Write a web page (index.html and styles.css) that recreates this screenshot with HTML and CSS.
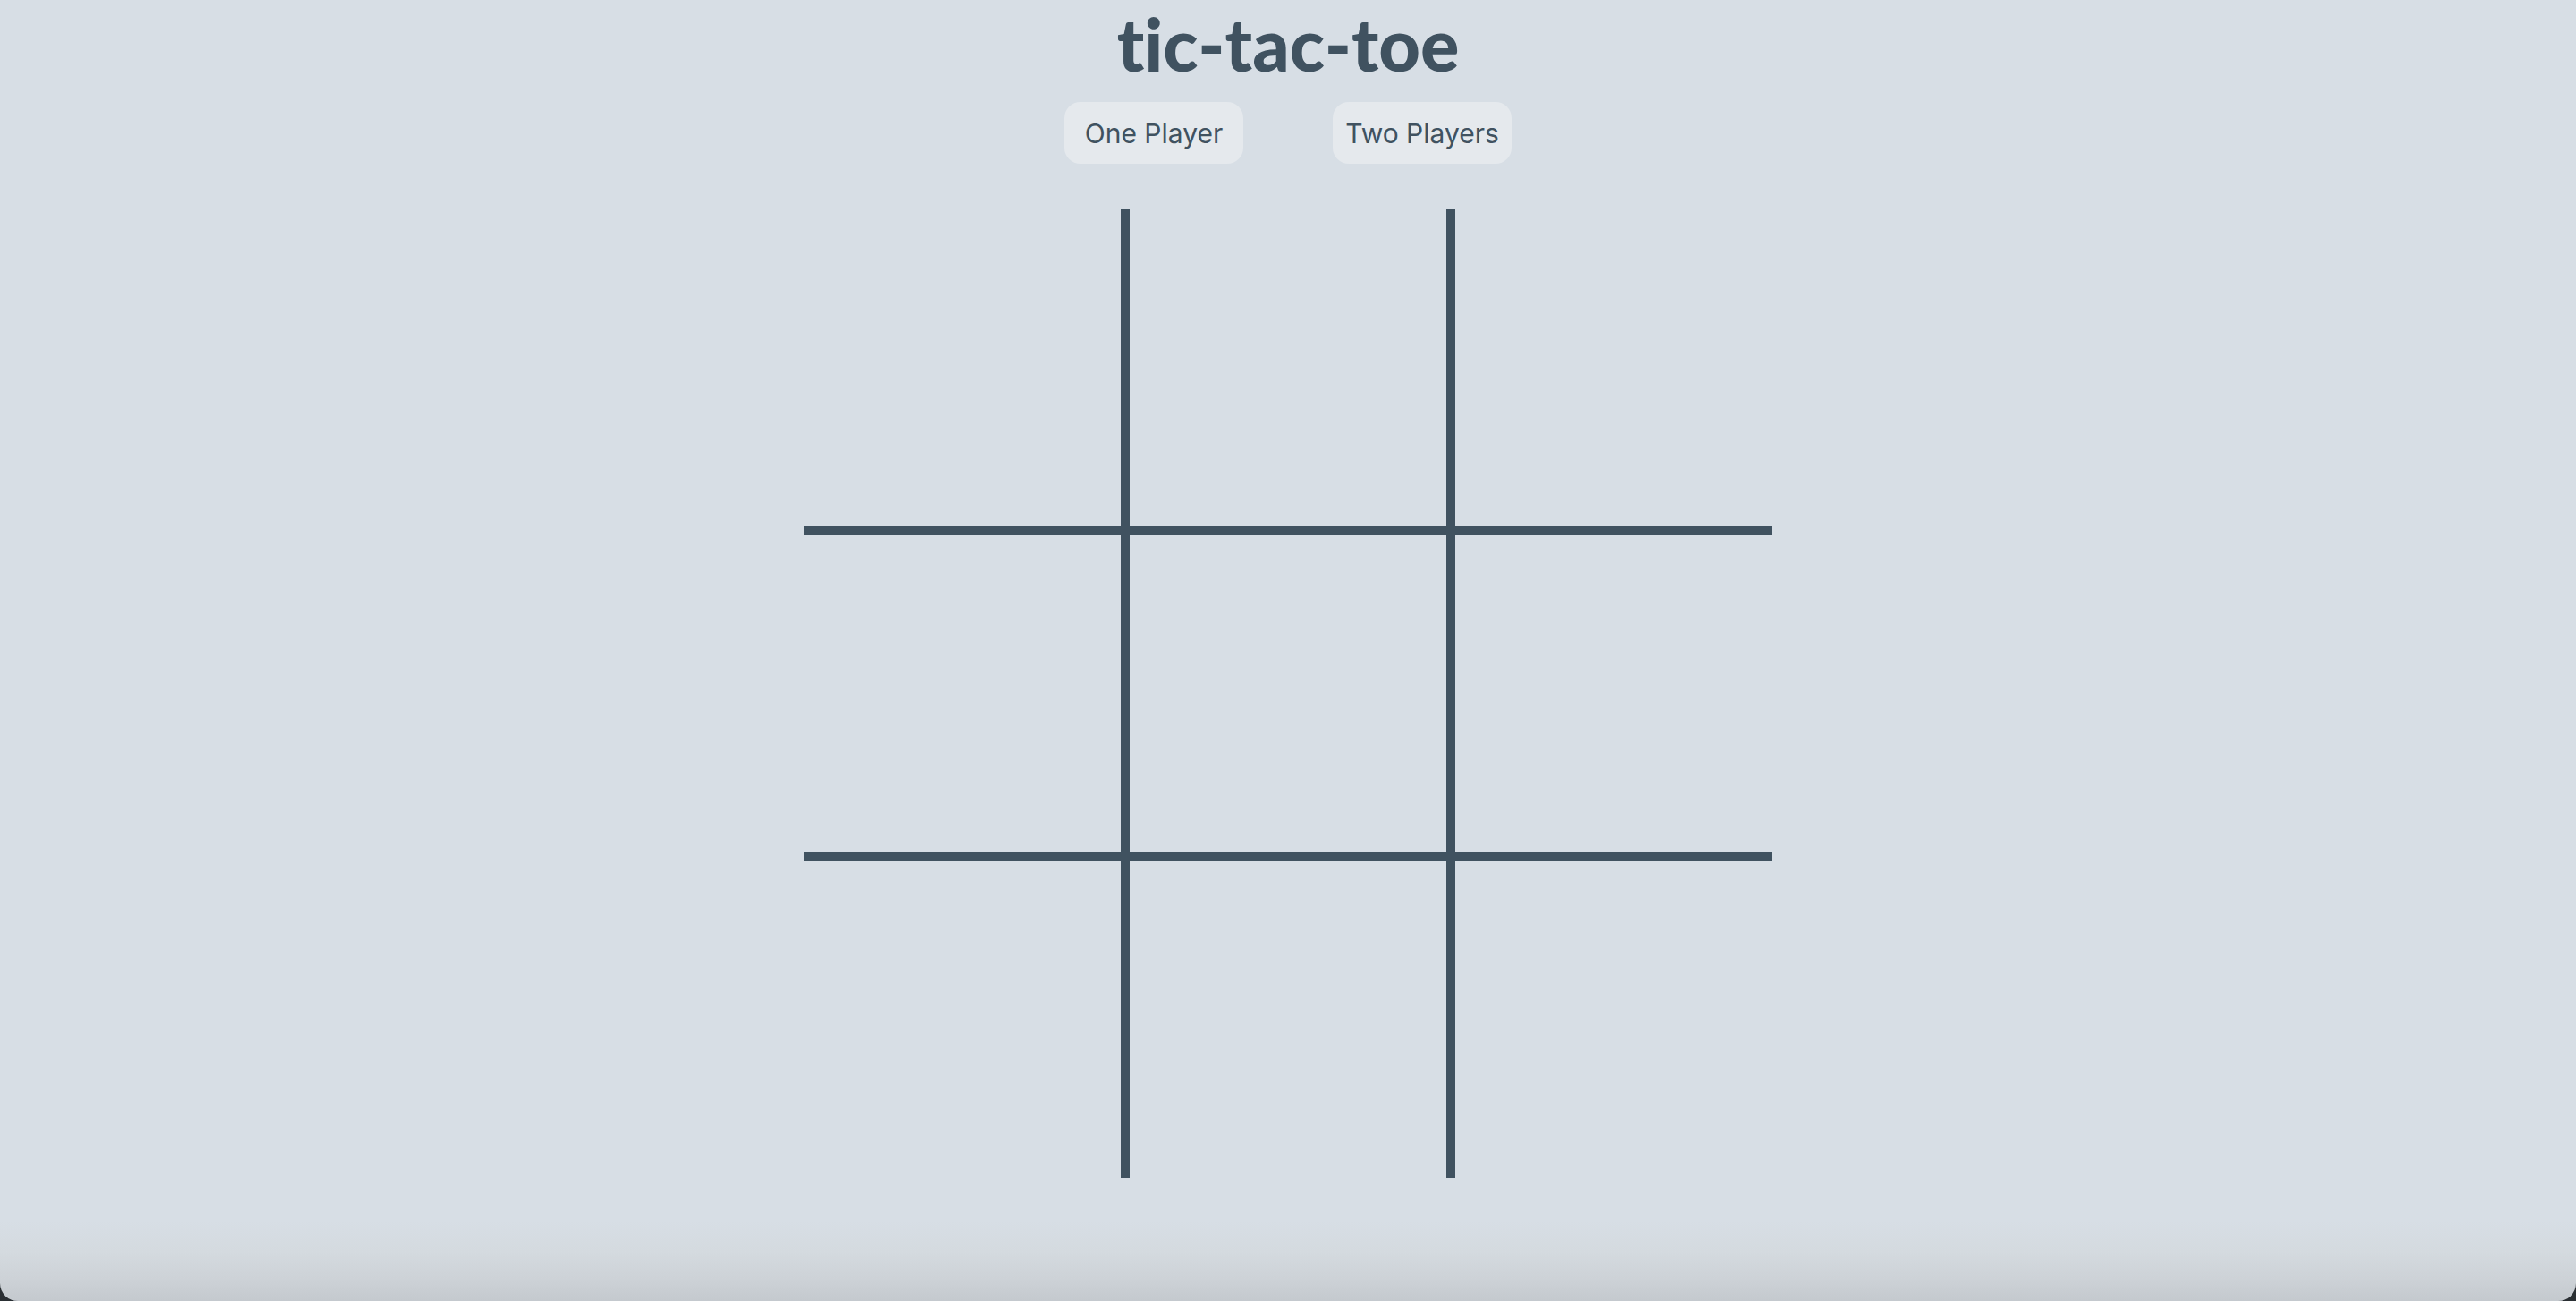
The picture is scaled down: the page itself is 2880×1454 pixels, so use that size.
FILE: index.html
```html
<!DOCTYPE html>
<html lang="en">
<head>
<meta charset="utf-8">
<title>tic-tac-toe</title>
<link rel="stylesheet" href="styles.css">
</head>
<body>
<div class="page">
  <h1 class="title">tic-tac-toe</h1>
  <div class="modes">
    <button class="mode">One Player</button>
    <button class="mode">Two Players</button>
  </div>
  <div class="board">
    <div class="cell"></div><div class="cell"></div><div class="cell"></div>
    <div class="cell"></div><div class="cell"></div><div class="cell"></div>
    <div class="cell"></div><div class="cell"></div><div class="cell"></div>
  </div>
</div>
</body>
</html>
```

FILE: styles.css
```css
html {
  background: #2a2f33;
  height: 100%;
}
body {
  margin: 0;
  height: 100%;
}
.page {
  height: 100%;
  box-sizing: border-box;
  background: linear-gradient(to bottom, #d7dee5 0, #d7dee5 calc(100% - 90px), #d4dadf calc(100% - 55px), #cdd2d7 calc(100% - 25px), #c4c9ce 100%);
  border-radius: 0 0 20px 20px;
  display: flex;
  flex-direction: column;
  align-items: center;
  padding-top: 0;
  color: #405260;
  overflow: hidden;
}
.title {
  margin: 0;
  font-family: "Lato", "Open Sans", sans-serif;
  font-weight: 900;
  font-size: 81px;
  line-height: 1.2;
  color: #405260;
  font-variant-ligatures: none;
}
.modes {
  display: flex;
  gap: 100px;
  margin-top: 17px;
}
.mode {
  width: 200px;
  height: 69px;
  border: none;
  border-radius: 18px;
  background: #e5e9ed;
  color: #405260;
  font-family: "Inter", "Noto Sans", sans-serif;
  font-size: 30px;
  padding: 0;
  display: flex;
  align-items: center;
  justify-content: center;
}
.board {
  margin-top: 51px;
  display: grid;
  grid-template-columns: repeat(3, 354px);
  grid-template-rows: repeat(3, 354px);
  gap: 10px;
  background: #405260;
}
.cell {
  background: #d7dee5;
}
```
